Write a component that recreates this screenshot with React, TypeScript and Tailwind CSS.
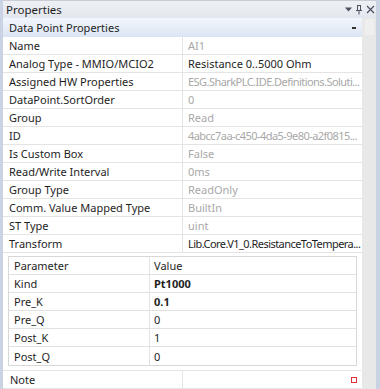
import React from "react";

const rows: { name: string; value: string; dark?: boolean; long?: boolean }[] = [
  { name: "Name", value: "AI1" },
  { name: "Analog Type - MMIO/MCIO2", value: "Resistance 0..5000 Ohm", dark: true },
  { name: "Assigned HW Properties", value: "ESG.SharkPLC.IDE.Definitions.Soluti...", long: true },
  { name: "DataPoint.SortOrder", value: "0" },
  { name: "Group", value: "Read" },
  { name: "ID", value: "4abcc7aa-c450-4da5-9e80-a2f0815...", long: true },
  { name: "Is Custom Box", value: "False" },
  { name: "Read/Write Interval", value: "0ms" },
  { name: "Group Type", value: "ReadOnly" },
  { name: "Comm. Value Mapped Type", value: "BuiltIn" },
  { name: "ST Type", value: "uint" },
  { name: "Transform", value: "Lib.Core.V1_0.ResistanceToTempera...", dark: true, long: true },
];

const params: { p: string; v: string; bold?: boolean }[] = [
  { p: "Kind", v: "Pt1000", bold: true },
  { p: "Pre_K", v: "0.1", bold: true },
  { p: "Pre_Q", v: "0" },
  { p: "Post_K", v: "1" },
  { p: "Post_Q", v: "0" },
];

export default function App() {
  return (
    <div
      className="w-[380px] h-[389px] overflow-hidden flex bg-[#e9ecf2] text-[11px] text-[#1e1e1e]"
      style={{ fontFamily: '"Noto Sans", "Open Sans", sans-serif' }}
    >
      <div className="w-[3px] bg-[#c9d3e3] shrink-0" />
      <div className="flex-1 flex flex-col min-w-0">
        {/* title bar */}
        <div className="h-[18px] shrink-0 flex items-center bg-gradient-to-b from-[#eef0f4] to-[#e3e7ee] border-t border-[#c8ccd4] pl-[3px] pr-[1px]">
          <span className="flex-1 leading-none text-[11.5px]">Properties</span>
          <div className="flex items-center gap-[3px]">
            <svg width="7" height="5" viewBox="0 0 7 5"><path d="M0 0.5h7L3.5 4.5z" fill="#4a5260" /></svg>
            <svg width="8" height="11" viewBox="0 0 8 11">
              <path d="M2 1.5h4M2.5 1.5v4.5M5.5 1.5v4.5M1 6.5h6M4 6.5v4" stroke="#4a5260" strokeWidth="1" fill="none" />
            </svg>
            <svg width="9" height="9" viewBox="0 0 9 9">
              <path d="M1 1l7 7M8 1l-7 7" stroke="#4a5260" strokeWidth="1.2" />
            </svg>
          </div>
        </div>
        <div className="flex-1 flex min-h-0">
          {/* grid */}
          <div className="w-[359px] shrink-0 flex flex-col bg-white">
            <div className="h-[19px] shrink-0 flex items-center bg-gradient-to-b from-[#f2f6fb] to-[#dbe5f3] pl-[6px] pr-[5px]">
              <span className="flex-1 leading-none">Data Point Properties</span>
              <span className="w-[4px] h-[2px] bg-[#333] mr-[1px]" />
            </div>
            {rows.map((r) => (
              <div key={r.name} className="h-[18px] shrink-0 flex border-b border-[#e4e4e4]">
                <div className="w-[180px] shrink-0 pl-[6px] flex items-center border-r border-[#e4e4e4] leading-none">
                  {r.name}
                </div>
                <div
                  className={`flex-1 min-w-0 pl-[5px] flex items-center leading-none whitespace-nowrap overflow-hidden ${
                    r.dark ? "text-[#1e1e1e]" : "text-[#a8a8a8]"
                  } ${r.long ? "tracking-[-0.55px]" : ""}`}
                >
                  {r.value}
                </div>
              </div>
            ))}
            <div className="pt-[3px] pl-[5px] pr-[5px]">
              <div className="border border-[#d8d8d8]">
                <div className="h-[18px] flex border-b border-[#e2e2e2]">
                  <div className="w-[141px] shrink-0 pl-[5px] flex items-center border-r border-[#e2e2e2] leading-none">Parameter</div>
                  <div className="flex-1 pl-[4px] flex items-center leading-none">Value</div>
                </div>
                {params.map((p, i) => (
                  <div
                    key={p.p}
                    className={`h-[18px] flex ${i < params.length - 1 ? "border-b border-[#e2e2e2]" : ""}`}
                  >
                    <div className="w-[141px] shrink-0 pl-[5px] flex items-center border-r border-[#e2e2e2] leading-none">{p.p}</div>
                    <div className={`flex-1 pl-[4px] flex items-center leading-none ${p.bold ? "font-bold" : ""}`}>{p.v}</div>
                  </div>
                ))}
              </div>
            </div>
            <div className="h-[4px] shrink-0" />
            <div className="h-[19px] shrink-0 flex border-t border-b border-[#e4e4e4] mr-[1px]">
              <div className="w-[180px] shrink-0 pl-[7px] flex items-center border-r border-[#e4e4e4] leading-none">Note</div>
              <div className="flex-1 flex items-center justify-end pr-[4px]">
                <div className="w-[6px] h-[6px] border border-[#e0303a] bg-white" />
              </div>
            </div>
          </div>
          {/* scrollbar */}
          <div className="flex-1 bg-[#e8e8e8] flex flex-col items-center pt-[1px]">
            <div className="w-[9px] h-[16px] bg-[#efefef]" />
          </div>
        </div>
      </div>
      <div className="w-[4px] bg-[#c9d3e3] shrink-0" />
    </div>
  );
}
